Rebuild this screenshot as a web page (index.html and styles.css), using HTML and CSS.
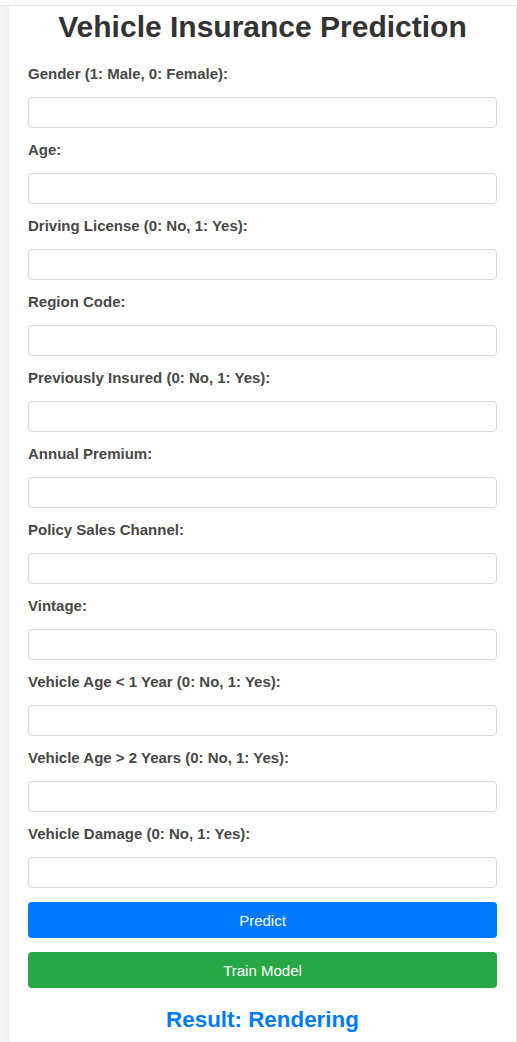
FILE: index.html
```html
<!DOCTYPE html>
<html lang="en">
<head>
<meta charset="utf-8">
<title>Vehicle Insurance Prediction</title>
<link rel="stylesheet" href="styles.css">
</head>
<body>
<div class="page">
  <div class="gutter"></div>
  <main class="card">
    <h1 class="title">Vehicle Insurance Prediction</h1>
    <form class="form">
      <label class="label">Gender (1: Male, 0: Female):</label>
      <input class="field" type="text">
      <label class="label">Age:</label>
      <input class="field" type="text">
      <label class="label">Driving License (0: No, 1: Yes):</label>
      <input class="field" type="text">
      <label class="label">Region Code:</label>
      <input class="field" type="text">
      <label class="label">Previously Insured (0: No, 1: Yes):</label>
      <input class="field" type="text">
      <label class="label">Annual Premium:</label>
      <input class="field" type="text">
      <label class="label">Policy Sales Channel:</label>
      <input class="field" type="text">
      <label class="label">Vintage:</label>
      <input class="field" type="text">
      <label class="label">Vehicle Age &lt; 1 Year (0: No, 1: Yes):</label>
      <input class="field" type="text">
      <label class="label">Vehicle Age &gt; 2 Years (0: No, 1: Yes):</label>
      <input class="field" type="text">
      <label class="label">Vehicle Damage (0: No, 1: Yes):</label>
      <input class="field" type="text">
      <button type="button" class="btn btn-blue">Predict</button>
      <button type="button" class="btn btn-green">Train Model</button>
    </form>
    <h2 class="result">Result: Rendering</h2>
  </main>
</div>
</body>
</html>
```

FILE: styles.css
```css
html, body {
  margin: 0;
  padding: 0;
  background: #ffffff;
  font-family: "Liberation Sans", Arial, sans-serif;
}
.page {
  margin-top: 5px;
  border-top: 1px solid #e4e4e4;
  display: flex;
  min-height: 1040px;
}
.gutter {
  width: 9px;
  flex: none;
  background: linear-gradient(to right, #f4f5f7, #eef0f3);
}
.card {
  flex: 1;
  background: #ffffff;
  border-right: 1px solid #e4e4e4;
  padding: 0 19px 0 19px;
}
.title {
  margin: 1px 0 0;
  font-size: 30px;
  line-height: 40px;
  font-weight: bold;
  color: #333333;
  text-align: center;
}
.form {
  display: flex;
  flex-direction: column;
  margin-top: 19px;
}
.label {
  font-size: 15px;
  line-height: 16px;
  font-weight: bold;
  color: #484848;
  margin-bottom: 15px;
}
.field {
  box-sizing: border-box;
  height: 31px;
  margin: 0 0 14px;
  border: 1px solid #d9d9d9;
  border-radius: 4px;
  background: #ffffff;
  font-size: 14px;
  padding: 6px 8px;
}
.btn {
  height: 36px;
  border: none;
  border-radius: 4px;
  color: #ffffff;
  font-family: "Liberation Sans", Arial, sans-serif;
  font-size: 15px;
  margin-bottom: 14px;
}
.btn-blue {
  background: #007bff;
}
.btn-green {
  background: #28a745;
}
.result {
  margin: 5px 0 0;
  font-size: 22.4px;
  line-height: 26px;
  font-weight: bold;
  color: #007bff;
  text-align: center;
}
```
